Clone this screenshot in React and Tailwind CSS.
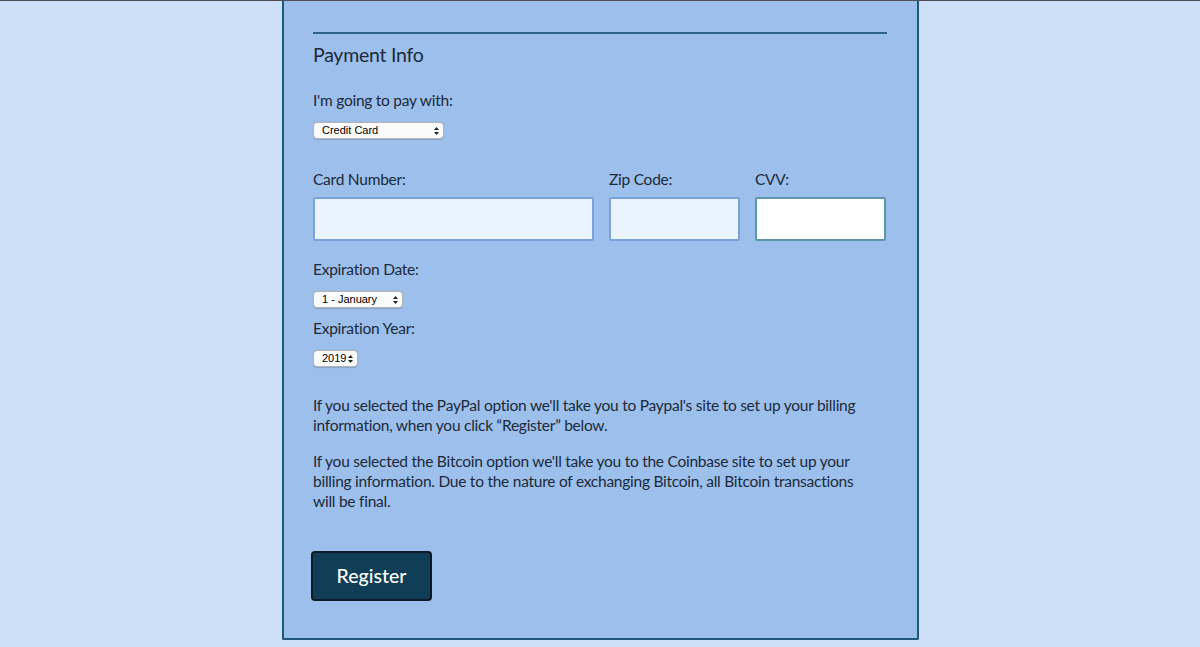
import { useState } from "react";

const font = { fontFamily: "Lato, 'Open Sans', sans-serif" };

// small mac-style select box, drawn by hand so it looks the same everywhere
const FakeSelect = ({ value, width }) => (
  <div
    className={`relative flex h-[17px] items-center rounded-[4px] border border-[#b4b4b4] bg-[#fbfbfb] pl-[8px] text-[11px] leading-none tracking-normal text-black shadow-[0_0.5px_1px_rgba(0,0,0,0.15)] ${width}`}
    style={{ fontFamily: "'Liberation Sans', Arial, sans-serif" }}
  >
    <span>{value}</span>
    <svg
      className="absolute right-[4px] top-[4px]"
      width="5"
      height="8"
      viewBox="0 0 5 8"
    >
      <path d="M2.5 0L5 3H0z" fill="#222" />
      <path d="M2.5 8L5 5H0z" fill="#222" />
    </svg>
  </div>
);

const App = () => {
  const [card, setCard] = useState("");
  const [zip, setZip] = useState("");
  const [cvv, setCvv] = useState("");

  return (
    <div className="min-h-[647px] border-t border-[#4d4f52] bg-[#cde0f8]" style={font}>
      <div className="ml-[282px] w-[637px] rounded-b-[2px] border-x-2 border-b-2 border-[#1f5878] bg-[#9dbfeb] pb-[37px] pl-[29px] pr-[30px] text-[15.5px] tracking-[-0.25px] text-[#1b2a3a]">
        <div className="pt-[31px]">
          <div className="h-[2px] bg-[#2d6488]" />
        </div>

        <h2 className="mt-[9px] text-[19.5px] leading-[24px]">Payment Info</h2>

        <p className="mt-[23px] leading-[20px]">I'm going to pay with:</p>
        <div className="mt-[12px]">
          <FakeSelect value="Credit Card" width="w-[131px]" />
        </div>

        {/* card fields */}
        <div className="mt-[30px] grid grid-cols-[281px_131px_131px] gap-x-[15px] leading-[20px]">
          <label>Card Number:</label>
          <label>Zip Code:</label>
          <label>CVV:</label>
          <input
            value={card}
            onChange={(e) => setCard(e.target.value)}
            className="mt-[8px] h-[44px] rounded-[2px] border-2 border-[#79a3d8] bg-[#eaf4fc] px-2 outline-none"
          />
          <input
            value={zip}
            onChange={(e) => setZip(e.target.value)}
            className="mt-[8px] h-[44px] rounded-[2px] border-2 border-[#79a3d8] bg-[#eaf4fc] px-2 outline-none"
          />
          <input
            value={cvv}
            onChange={(e) => setCvv(e.target.value)}
            className="mt-[8px] h-[44px] rounded-[2px] border-2 border-[#5b97ab] bg-white px-2 outline-none"
          />
        </div>

        <p className="mt-[18px] leading-[20px]">Expiration Date:</p>
        <div className="mt-[12px]">
          <FakeSelect value="1 - January" width="w-[90px]" />
        </div>

        <p className="mt-[10px] leading-[20px]">Expiration Year:</p>
        <div className="mt-[12px]">
          <FakeSelect value="2019" width="w-[45px]" />
        </div>

        <p className="mt-[28px] whitespace-nowrap leading-[20px]">
          If you selected the PayPal option we'll take you to Paypal's site to set up your billing
          <br />
          information, when you click “Register” below.
        </p>
        <p className="mt-[16px] whitespace-nowrap leading-[20px]">
          If you selected the Bitcoin option we'll take you to the Coinbase site to set up your
          <br />
          billing information. Due to the nature of exchanging Bitcoin, all Bitcoin transactions
          <br />
          will be final.
        </p>

        <button className="-ml-[2px] mt-[40px] h-[50px] w-[121px] rounded-[4px] border-2 border-[#0a1a24] bg-[#0f3e56] text-[19.5px] font-medium tracking-normal text-white">
          Register
        </button>
      </div>
    </div>
  );
};

export default App;
